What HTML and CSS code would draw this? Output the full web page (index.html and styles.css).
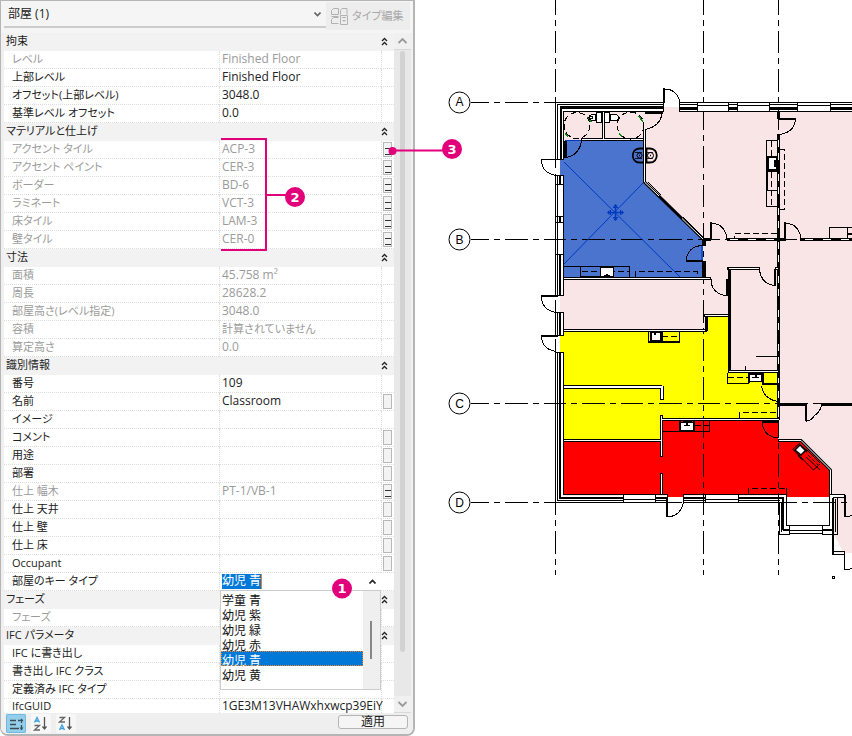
FILE: index.html
```html
<!DOCTYPE html>
<html lang="ja">
<head>
<meta charset="utf-8">
<title>部屋</title>
<link rel="stylesheet" href="styles.css">
</head>
<body>
<svg class="defs" aria-hidden="true">
  <symbol id="fold" viewBox="0 0 7 9"><path d="M1 4 3.500 1.500 6 4M1 8 3.500 5.500 6 8" fill="none" stroke="#222" stroke-width="1.300"/></symbol>
</svg>
<main class="workspace">
<section class="panel">
  <header class="panel-head">
    <select class="type-select" aria-label="タイプ"><option>部屋 (1)</option></select>
    <button class="type-edit" type="button" disabled>
      <svg width="17" height="17" viewBox="0 0 17 17" fill="none" stroke="#b2b2b2"><path d="M.5 6.500v-4l2-2h5v6zM9.500 6.500v-4l1.500-2h5v6M7.500 15.500h-7v-4l2-2h5M.5 8.500h7"/><path d="M9.500 7.500h7v9h-7zM11 9.500h4"/><path d="M11 12h4l-2 2z" fill="#b2b2b2" stroke="none"/></svg>
      <span>タイプ編集</span>
    </button>
  </header>
  <div class="panel-body">
    <div class="list">
    <table class="props">
      <colgroup><col class="c-name"><col class="c-value"><col class="c-btn"></colgroup>
      <tbody>
        <tr class="group"><th colspan="2">拘束</th><td><button type="button" aria-label="折りたたむ"><svg><use href="#fold"/></svg></button></td></tr>
        <tr class="off"><th>レベル</th><td>Finished Floor</td><td></td></tr>
        <tr><th>上部レベル</th><td>Finished Floor</td><td></td></tr>
        <tr><th>オフセット(上部レベル)</th><td>3048.0</td><td></td></tr>
        <tr><th>基準レベル オフセット</th><td>0.0</td><td></td></tr>
      </tbody>
      <tbody>
        <tr class="group"><th colspan="2">マテリアルと仕上げ</th><td><button type="button" aria-label="折りたたむ"><svg><use href="#fold"/></svg></button></td></tr>
        <tr class="off"><th>アクセント タイル</th><td>ACP-3</td><td><button class="assoc linked" type="button" aria-label="関連付け"></button></td></tr>
        <tr class="off"><th>アクセント ペイント</th><td>CER-3</td><td><button class="assoc linked" type="button" aria-label="関連付け"></button></td></tr>
        <tr class="off"><th>ボーダー</th><td>BD-6</td><td><button class="assoc linked" type="button" aria-label="関連付け"></button></td></tr>
        <tr class="off"><th>ラミネート</th><td>VCT-3</td><td><button class="assoc linked" type="button" aria-label="関連付け"></button></td></tr>
        <tr class="off"><th>床タイル</th><td>LAM-3</td><td><button class="assoc linked" type="button" aria-label="関連付け"></button></td></tr>
        <tr class="off"><th>壁タイル</th><td>CER-0</td><td><button class="assoc linked" type="button" aria-label="関連付け"></button></td></tr>
      </tbody>
      <tbody>
        <tr class="group"><th colspan="2">寸法</th><td><button type="button" aria-label="折りたたむ"><svg><use href="#fold"/></svg></button></td></tr>
        <tr class="off"><th>面積</th><td>45.758 m²</td><td></td></tr>
        <tr class="off"><th>周長</th><td>28628.2</td><td></td></tr>
        <tr class="off"><th>部屋高さ(レベル指定)</th><td>3048.0</td><td></td></tr>
        <tr class="off"><th>容積</th><td class="ja">計算されていません</td><td></td></tr>
        <tr class="off"><th>算定高さ</th><td>0.0</td><td></td></tr>
      </tbody>
      <tbody>
        <tr class="group"><th colspan="2">識別情報</th><td><button type="button" aria-label="折りたたむ"><svg><use href="#fold"/></svg></button></td></tr>
        <tr><th>番号</th><td>109</td><td></td></tr>
        <tr><th>名前</th><td>Classroom</td><td><button class="assoc" type="button" aria-label="関連付け"></button></td></tr>
        <tr><th>イメージ</th><td></td><td></td></tr>
        <tr><th>コメント</th><td></td><td><button class="assoc" type="button" aria-label="関連付け"></button></td></tr>
        <tr><th>用途</th><td></td><td><button class="assoc" type="button" aria-label="関連付け"></button></td></tr>
        <tr><th>部署</th><td></td><td><button class="assoc" type="button" aria-label="関連付け"></button></td></tr>
        <tr class="off"><th>仕上 幅木</th><td>PT-1/VB-1</td><td><button class="assoc linked" type="button" aria-label="関連付け"></button></td></tr>
        <tr><th>仕上 天井</th><td></td><td><button class="assoc" type="button" aria-label="関連付け"></button></td></tr>
        <tr><th>仕上 壁</th><td></td><td><button class="assoc" type="button" aria-label="関連付け"></button></td></tr>
        <tr><th>仕上 床</th><td></td><td><button class="assoc" type="button" aria-label="関連付け"></button></td></tr>
        <tr><th>Occupant</th><td></td><td><button class="assoc" type="button" aria-label="関連付け"></button></td></tr>
        <tr><th><label for="key">部屋のキー タイプ</label></th>
          <td class="combo" colspan="2">
            <div class="combo-field"><input id="key" type="text" value="幼児 青">
            <button type="button" aria-label="閉じる"><svg width="7" height="5" viewBox="0 0 7 5"><path d="M.5 4.500 3.500 1.500 6.500 4.500" fill="none" stroke="#222" stroke-width="1.600"/></svg></button></div>
            <div class="popup">
              <select size="6" aria-label="部屋のキー タイプの候補"><option>学童 青</option><option>幼児 紫</option><option>幼児 緑</option><option>幼児 赤</option><option selected>幼児 青</option><option>幼児 黄</option></select>
              <div class="popup-scroll"><span></span></div>
            </div>
          </td></tr>
      </tbody>
      <tbody>
        <tr class="group"><th colspan="2">フェーズ</th><td><button type="button" aria-label="折りたたむ"><svg><use href="#fold"/></svg></button></td></tr>
        <tr class="off"><th>フェーズ</th><td></td><td></td></tr>
      </tbody>
      <tbody>
        <tr class="group"><th colspan="2">IFC パラメータ</th><td><button type="button" aria-label="折りたたむ"><svg><use href="#fold"/></svg></button></td></tr>
        <tr><th>IFC に書き出し</th><td></td><td></td></tr>
        <tr><th>書き出し IFC クラス</th><td></td><td></td></tr>
        <tr><th>定義済み IFC タイプ</th><td></td><td></td></tr>
        <tr class="last"><th>IfcGUID</th><td>1GE3M13VHAWxhxwcp39EiY</td><td></td></tr>
      </tbody>
    </table>
    </div>
    <div class="scroll">
      <button type="button" aria-label="上へ"><svg width="9" height="6" viewBox="0 0 9 6"><path d="M.5 5 4.500 1 8.500 5" fill="none" stroke="#999" stroke-width="1.800"/></svg></button>
      <div class="track"><span></span></div>
      <button type="button" aria-label="下へ"><svg width="9" height="6" viewBox="0 0 9 6"><path d="M.5 1 4.500 5 8.500 1" fill="none" stroke="#999" stroke-width="1.800"/></svg></button>
    </div>
  </div>
  <footer class="panel-foot">
    <button class="sort on" type="button" aria-label="グループ別"><svg width="18" height="18" viewBox="0 0 18 18" fill="none" stroke="#3c4c55" stroke-width="1.300"><path d="M3 5.500h6M3 9.500h6M3 13.500h9M11 5.500h2M14.500 4v4M14.500 10v5"/><path d="M12.500 6l2-2.500 2 2.500zM12.500 12.500l2 2.500 2-2.500z" fill="#3c4c55" stroke="none"/></svg></button>
    <button class="sort" type="button" aria-label="昇順"><svg width="18" height="18" viewBox="0 0 18 18" fill="none" stroke-width="1.300"><path d="M2.500 7.500 5 2.500l2.500 5M3.500 6h3" stroke="#3d9fe0"/><path d="M2.500 10.500h5l-5 4.500h5.500" stroke="#666"/><path d="M12.500 2v12M10.500 11.500l2 2.500 2-2.500" stroke="#555"/></svg></button>
    <button class="sort" type="button" aria-label="降順"><svg width="18" height="18" viewBox="0 0 18 18" fill="none" stroke-width="1.300"><path d="M2.500 2.500h5l-5 4.500h5.500" stroke="#666"/><path d="M2.500 15 5 10l2.500 5M3.500 13.500h3" stroke="#3d9fe0"/><path d="M12.500 2v12M10.500 11.500l2 2.500 2-2.500" stroke="#555"/></svg></button>
    <button class="apply" type="button">適用</button>
  </footer>
</section>
<section class="plan">
<svg viewBox="415 0 437 736" preserveAspectRatio="xMinYMin meet" role="img" aria-label="平面図">
  <!-- room fills -->
  <path class="pink" d="M563 111H852V496H563zM664 107h15v5h-15zM832 496h20v57h-20zM560 295h5v17h-5z"/>
  <path class="blue" d="M564 141H644V183L703 240V278H564zM560 159h5v17h-5z"/>
  <path class="yellow" d="M564 331H706V315H728V372H778V419H662V440H564zM560 335h5v17h-5z"/>
  <path class="red" d="M564 441H661V420H778V440H802L830 469V497H787V494H683V497H667V494H564z"/>
  <path fill="#fff" d="M787 497h43v28h-43zM782 494h5v30h-5z"/>
  <!-- grid lines -->
  <g class="grid">
    <path d="M470.500 102.500H556M470.500 239.500H852M470.500 403.500H852M470.500 502.500H852"/>
    <path class="gv" d="M555.500 0V575M703.500 0V575M778.500 0V575"/>
  </g>
  <g class="bubbles"><circle cx="459.500" cy="102.500" r="10.500"/><circle cx="459.500" cy="239.500" r="10.500"/><circle cx="459.500" cy="403.500" r="10.500"/><circle cx="459.500" cy="502.500" r="10.500"/>
    <text x="459.500" y="106">A</text><text x="459.500" y="244">B</text><text x="459.500" y="408">C</text><text x="459.500" y="507">D</text></g>
  <!-- room reference mark -->
  <g class="mark"><path d="M564 162 680 277M644 182 564 264"/><path class="bold" d="M608 212.500h15M615.500 205v15"/><path d="M610.500 210v5M620.500 210v5M613 207.500h5M613 217.500h5"/><path d="M607 212.500l2.500-2.500v5zM624 212.500l-2.500-2.500v5zM615.500 204l-2.500 2.500h5zM615.500 221l-2.500-2.500h5z" fill="#0038c0" stroke="none"/></g>
  <!-- outer walls -->
  <g class="ln">
    <path d="M555.500 102V159M555.500 175V295M555.500 312V335M555.500 352V502.500"/>
    <path d="M557.500 104V159M557.500 175V295M557.500 312V335M557.500 352V500.500"/>
    <path d="M563.500 111V159M563.500 175V295M563.500 312V335M563.500 352V494"/>
    <path d="M555 102.500H664M679 102.500H852M557 104.500H664M679 104.500H852M563 111.500H664M679 111.500H852"/>
    <path d="M555 502.500H667M683 502.500H780M557 500.500H623M655 500.500H667M683 500.500H705M738 500.500H780M563 494.500H667M683 494.500H787"/>
    <path d="M556 159.500h8M556 175.500h8M556 184.500h8M556 216.500h8M556 222.500h8M556 254.500h8M556 295.500h8M556 312.500h8M556 335.500h8M556 352.500h8"/>
  </g>
  <path class="w2" d="M561 108V159M560 175V184M560 216V222M560 254V295M560 312V335M560 352V498"/>
  <path class="w3" d="M560 107.500H664M679 108.500H697M728 108.500H738M770 108.500H798M830 108.500H852"/>
  <path class="w2" d="M559 498H623M655 498H667M683 498H705M738 498H783"/>
  <path class="win" d="M697 102.500h31v9h-31zM697 105.500h31M737.500 102.500h32v9h-32zM737.500 105.500h32M797.500 102.500h33v9h-33zM797.500 105.500h33M623.500 494.500h32v8h-32zM623.500 499.500h32M705.500 494.500h33v8h-33zM705.500 499.500h33"/>
  <path class="ln" d="M663.500 102v10M679.500 102v10M667.500 494v8M683.500 494v8"/>
  <!-- outer doors -->
  <g class="ln">
    <path d="M556 159.500H541.500C541.500 169 547 174 556 175.500M541.500 296C541.500 306 547 311 556 312.500M541.500 336C541.500 345 547 350 556 351.500M665 89C673 89 679 95 679.500 102M668 517C677 516 682 511 683.500 502"/>
  </g>
  <path class="w2" d="M541 296H558M541 336H558M664 88V103M667 497V517"/>
  <!-- washrooms -->
  <path class="dw" d="M603.500 111V139M581 139.500H645"/><path class="dwi" d="M603.500 112V140M582 139.500H645"/>
  <g class="dash"><circle cx="577" cy="125.500" r="13"/><circle cx="630.500" cy="125.500" r="13.500"/></g>
  <path d="M588 117l3 5M565 133l3 4M639 116l4 6M619 133l3 4" stroke="#0a8a0a" stroke-width="1.400"/>
  <g class="win"><path d="M596.500 112.500h5v10h-5zM595.500 114.500c-9-1-9 7 0 6zM604.500 112.500h5v10h-5zM610.500 114.500c11-2 11 8 0 6z"/><circle cx="591" cy="117.500" r="1.500"/></g>
  <path class="ln" d="M662.500 112C661 123 653 128 645 129.500M581.500 141C580 151 574 156 566 157.500"/>
  <path class="w3" d="M645 112.500H663M565.500 141V158"/><path class="mark2" d="M565 140.500H581"/>
  <!-- diagonal wall -->
  <path class="dw smooth" d="M644.500 130V182L703 239"/><path class="dwi smooth" d="M644.500 130V182L659 196M682 218.500 703 239"/>
  <path class="ln smooth" d="M648 182 661 195M683 217 704 238"/>
  <!-- wash basins -->
  <g class="smooth" fill="none" stroke="#000"><path d="M643 148.500h-3.500c-9 0-9 14 0 14h3.500" stroke-width="1.800"/><path d="M646.500 148.500h3.500c9 0 9 14 0 14h-3.500z" fill="#f9e5e5" stroke-width="1.800"/><path d="M635 152.500h7M635 158.500h7M647 152.500h6M647 158.500h6" stroke-width=".8"/><circle cx="639.500" cy="155.500" r="2.500"/><circle cx="650.500" cy="155.500" r="3"/><path d="M639 155.500h1M650 155.500h1" stroke-width="1.500"/></g>
  <!-- centre wing walls -->
  <path class="dw" d="M703 239.500H711M727 239.500H778M778 239.500H786M800 239.500H852"/><path class="dwi" stroke-dasharray="8 10" d="M730 239.500H777M805 239.500H850"/>
  <path class="w3" d="M778.500 111V119M778.500 134V405"/><path class="dwi" stroke-dasharray="7 6 7 14" d="M778.500 140V402"/>
  <path class="w2" d="M711 222V240M785 222V240M779 118.500H796"/>
  <path class="ln" d="M712 223C721 224 726 230 727 239M786 223C795 224 800 230 801 239M795.500 119C795 128 789 133 780 134.500"/>
  <g class="ln"><path d="M766.500 140.500H777M766.500 156.500H777M766.500 190.500H777M766.500 206.500H777M766.500 140V207M829.500 239V227.500H852M847.500 227V239"/></g>
  <path class="w2" d="M767 170V190M767 157V170"/><path class="win" d="M768.500 157.500h8v12h-8z"/><path class="w2" d="M774 163.500h4M775 160v7M768 170.500h9"/><path class="w2" d="M847 233.500h5"/>
  <path class="dash" d="M771.500 141V156M771.500 172V206M780 149.500H784.500V209.500H780M777 233.500H734.500V239M635.500 277V271.500H697V277"/>
  <!-- classroom south side -->
  <path class="w4" d="M703.500 240V246M703.500 261V278"/><path d="M702 246v15" stroke="#1450d0" stroke-width="2"/>
  <path class="w2" d="M686 261H703"/><path class="ln" d="M686.500 260C687 251 693 246 702 245.500"/>
  <path class="ln" d="M564 266.500H629.500V277M580.500 267V277M600.500 267V277M613.500 267V277"/><path class="dash" d="M582 271.500H629"/>
  <path class="win" d="M600.500 267.500h13v9h-13z"/><path class="w2" d="M604 275.500h6M607 274v2M580 277H614"/>
  <path class="dw" d="M563 278.500H711M563 330.500H707M704 315.500H728"/><path class="dwi" d="M564 278.500H710M564 330.500H706M705 315.500H728"/>
  <path class="w3" d="M706.500 317V331M727.500 279V296"/><path class="ln" d="M711 279C711 289 717 295 727 295.500"/>
  <path class="w3" d="M729.500 268V373"/><path class="dw" d="M727 268.500H760M775 268.500H779M731 371.500H778"/><path class="dwi" d="M729 268.500H759M776 268.500H778M729 371.500H778"/>
  <path class="w2" d="M775 269V286"/><path class="ln" d="M759.500 270C761 280 766 285 775 285.500M756 356.500H777M745.500 366V371"/>
  <!-- yellow rooms -->
  <path class="ln" d="M648.500 332V342.500H679.500V332"/><path class="w2" d="M648 342H680M661.500 332V342"/><path class="win" d="M650.500 332.500h10v8h-10z"/><path class="dash" d="M662 336.500H679"/><path class="w2" d="M651 332v9M655 332v3M651 341h9"/>
  <path class="ln" d="M727.500 373V383.500H749"/><path class="dash" stroke-dasharray="3 2" d="M728 377.500H748"/><path class="win" d="M749.500 374.500h12v7h-12z"/><path class="w2" d="M748 374H763M749 374V383M755.500 374v3M763 373V385M763 384H779"/><path class="ln" d="M752 377.500h7"/>
  <path class="ln" d="M761.500 386C763 396 769 400 778 401.500"/><path class="dash" d="M739.500 418V412.500H777"/>
  <path d="M564 387H662M662 386V400" class="dw5"/><path d="M564 387H662M662 386V399" class="dwi3"/>
  <path class="dw" d="M564 440.500H661M661 419.500H779M661.500 415V457M661.500 473V494M778.500 405V420"/><path class="dwi" d="M564 440.500H661M661 419.500H779M661.500 416V456M661.500 474V494M778.500 407V417"/>
  <!-- red rooms -->
  <path class="ln" d="M663 431.500H709.500V421M694.500 421V431"/><path class="dash" stroke-dasharray="3 2" d="M695 425.500H709"/><path class="win" d="M680.500 422.500h13v8h-13z"/><path class="w2" d="M680 421V431H694V421M683 422h9M687 421v4"/><path class="ln" d="M684 425.500h6"/>
  <path class="w2" d="M762 422H779"/><path class="ln" d="M762 422C763 432 769 437 778 438"/>
  <path class="w3" d="M778 404.500H806M822 404.500H852"/><path class="w2" d="M806 404V421"/><path class="ln" d="M806 421.500C811 420 813 419 814 416C819 413 821 409 822 404"/>
  <path class="dw smooth" d="M778 440.500H801L830.500 470V496"/><path class="dwi smooth" d="M779 440.500H801L830.500 470V496"/>
  <g class="smooth ln"><path d="M792.500 449.500 800 443M793 449.500 813.500 470 820 464M806 457 820 470M806 449 820 463"/><path d="M808 455 818 465" stroke-dasharray="4 2"/><path d="M795 450l5-5 6 5-5 5z" fill="#fff" stroke-width="1.500"/><path d="M801 446l6 6M798 455l5 5" stroke-width="1.500"/></g>
  <path class="dash" d="M748.500 494V488.500H786"/>
  <!-- bay -->
  <path class="ln" d="M786.500 488V525.500H829.500V494M779.500 502V534.500H789.500M781.500 502V532M790 533.500H822M790 530.500H822M822 534.500H837.500V498M835.500 499V532M789.500 525V535M822.500 525V535"/>
  <path class="w2" d="M783 497V530M783 530H790M822 530H833M833 498V530"/>
  <path class="win" d="M830 494.500H844.500V497.500H832.500M832.500 532V554.500H844.500M834.500 552V551.500H844.500V554"/>
  <path class="w2" d="M833 530V554M845 495V517"/><path class="ln" d="M844.500 554V569.500H848L852 568.500M845 516.500H848L852 515.500M832.500 576V578.500H834.500V576.500H832"/>
</svg>
</section>
<svg class="callouts" width="480" height="736" viewBox="0 0 480 736">
  <path d="M221 139H266V250H221M266 195H295M392 150.500H452" fill="none" stroke="#e2007a" stroke-width="2"/>
  <circle cx="392.500" cy="151" r="4"/><circle cx="342" cy="588.500" r="10"/><circle cx="295" cy="197" r="10"/><circle cx="452" cy="149" r="10"/>
  <text x="342" y="593">1</text><text x="295" y="202">2</text><text x="452" y="154">3</text>
</svg>
</main>
</body>
</html>
```
FILE: styles.css
```css
* { box-sizing: border-box; }
body { margin: 0; background: #fff; color: #222; font: 12px/16px "Open Sans", "Noto Sans CJK JP", sans-serif; font-feature-settings: "palt"; }
button, input, select { font: inherit; font-feature-settings: inherit; color: inherit; margin: 0; padding: 0; border: 0; background: none; }
.defs { position: absolute; width: 0; height: 0; }
.workspace { position: relative; display: grid; grid-template-columns: 415px minmax(0, 1fr); height: 100vh; }

.panel { display: flex; flex-direction: column; min-height: 0; background: #f0f0f0; border: 1px solid #b5b5b5; border-width: 1px 2px 2px 1px; border-radius: 0 0 8px 8px; overflow: hidden; }
.panel-head { display: flex; align-items: flex-start; padding: 1px 3px 3px; background: #f5f5f5; }
.type-select { flex: 1; height: 26px; padding: 0 8px 0 4px; border-bottom: 2px solid #ccc; appearance: none; background: #f5f5f5 url("data:image/svg+xml,%3Csvg xmlns='http://www.w3.org/2000/svg' width='7' height='5'%3E%3Cpath d='M.5.5l3 3 3-3' fill='none' stroke='%23666' stroke-width='1.600'/%3E%3C/svg%3E") right 5px center no-repeat; }
.type-edit { display: flex; align-items: center; gap: 4px; width: 84px; height: 28px; padding-left: 5px; background: #ededed; color: #a8a8a8; font-size: 11px; white-space: nowrap; }

.panel-body { flex: 1; display: flex; min-height: 0; padding: 0 2px 0 3px; }
.list { flex: 1; min-width: 0; overflow: hidden; background: #fff; }
.props { width: 100%; table-layout: fixed; border-collapse: separate; border-spacing: 0; }
.c-name { width: 215px; }
.c-btn { width: 13px; }
.props th, .props td { height: 18px; padding: 0 0 1px 2px; border-bottom: 1px dotted #ddd; font-weight: 400; text-align: left; white-space: nowrap; line-height: 16px; vertical-align: middle; }
.props th, .props .ja { font-size: 11px; }
.props th { padding-left: 8px; }
.props td { border-left: 1px dotted #ddd; }
.props .group th, .props .group td { background: #f2f2f2; border-color: #f2f2f2; }
.props .group th { padding-left: 2px; }
.props .group td:last-child { padding: 0; border-left: 0; }
.props .last th, .props .last td { line-height: 14px; vertical-align: top; }
.group button { display: block; width: 7px; height: 9px; }
.group svg { display: block; width: 7px; height: 9px; }
.off { color: #9b9b9b; }
.props td:last-child { padding: 0 0 0 1px; }
.assoc { display: flex; align-items: center; justify-content: center; width: 9px; height: 15px; border: 1px solid #b8b8b8; background: #f3f3f3; }
.linked::before { content: ""; width: 6px; height: 5px; margin-top: 4px; border: solid #333; border-width: 1px 0; }

.props td.combo { position: relative; padding: 0; }
.combo-field { display: flex; align-items: center; justify-content: space-between; padding: 0 18px 1px 2px; height: 17px; }
.combo-field input { width: 40px; height: 15px; background: #0078d7; color: #fff; border-right: 1px solid #f08020; }
.combo-field svg { display: block; }
.popup { position: absolute; z-index: 1; top: 17px; left: 0; display: flex; width: 161px; height: 100px; border: 1px solid #ccc; background: #fff; }
.popup select { flex: 1; height: 90px; overflow: hidden; outline: 0; color: #111; scrollbar-width: none; }
.popup option { height: 15px; min-height: 15px; padding: 0 0 3px 1px; line-height: 12px; }
.popup option:checked { background: #0078d7 linear-gradient(#0078d7, #0078d7); color: #fff; -webkit-text-fill-color: #fff; outline: 1px dotted #f08020; outline-offset: -1px; }
.popup-scroll { width: 17px; padding: 30px 0 0 7px; background: #efefef; }
.popup-scroll span { display: block; width: 2px; height: 38px; background: #888; }

.scroll { display: flex; flex-direction: column; width: 17px; background: #e8e8e8; }
.scroll button { display: flex; align-items: center; justify-content: center; height: 17px; background: #f0f0f0; border: solid #d8d8d8; border-width: 0 0 1px; }
.track { flex: 1; display: flex; justify-content: center; padding: 1px 0 44px; }
.track span { width: 5px; border-radius: 3px; background: #d2d2d2; }

.panel-foot { display: flex; align-items: flex-start; gap: 5px; height: 21px; padding: 1px 5px 0; background: #efefef; }
.sort { width: 20px; height: 19px; padding: 0 1px; background: #f7f7f7; border-radius: 2px; }
.sort svg { display: block; }
.sort.on { background: #93cfeb; box-shadow: inset 0 0 0 1px #6fbbe0; }
.apply { width: 70px; height: 14px; margin: 1px 0 0 auto; border: 1px solid #b5b5b5; border-radius: 3px; background: #f5f5f5; line-height: 12px; }

.plan { min-width: 0; overflow: hidden; }
.plan svg { display: block; width: 100%; shape-rendering: crispEdges; }
.pink { fill: #f9e5e5; }
.blue { fill: #4b74cf; }
.yellow { fill: #ff0; }
.red { fill: #f00; }
.grid { fill: none; stroke: #000; stroke-dasharray: 22.5 5 6 5; stroke-dashoffset: 4; }
.grid .gv { stroke-dashoffset: 8; }
.bubbles circle { fill: #fff; stroke: #000; shape-rendering: auto; }
.bubbles text { font: 12px "Liberation Sans", sans-serif; text-anchor: middle; }
.mark { fill: none; stroke: #0038c0; shape-rendering: auto; }
.mark .bold { stroke-width: 1.5; }
.mark2 { stroke: #0038c0; }
.ln, .dash { fill: none; stroke: #000; stroke-width: 1; }
.dash { stroke-dasharray: 6 3; }
.w2, .w3, .w4, .dw, .dw5, .dwi, .dwi3 { fill: none; stroke: #000; }
.w2 { stroke-width: 2; }
.w3, .dw { stroke-width: 3; }
.w4 { stroke-width: 4; }
.dw5 { stroke-width: 4; }
.dwi { stroke: #fff; stroke-width: 1; }
.dwi3 { stroke: #fff; stroke-width: 2; }
.win { fill: #fff; stroke: #000; }
.smooth { shape-rendering: auto; }

.callouts { position: absolute; top: 0; left: 0; z-index: 2; pointer-events: none; }
.callouts circle { fill: #e2007a; }
.callouts text { font: 700 13px "DejaVu Sans", sans-serif; text-anchor: middle; fill: #fff; }
```
